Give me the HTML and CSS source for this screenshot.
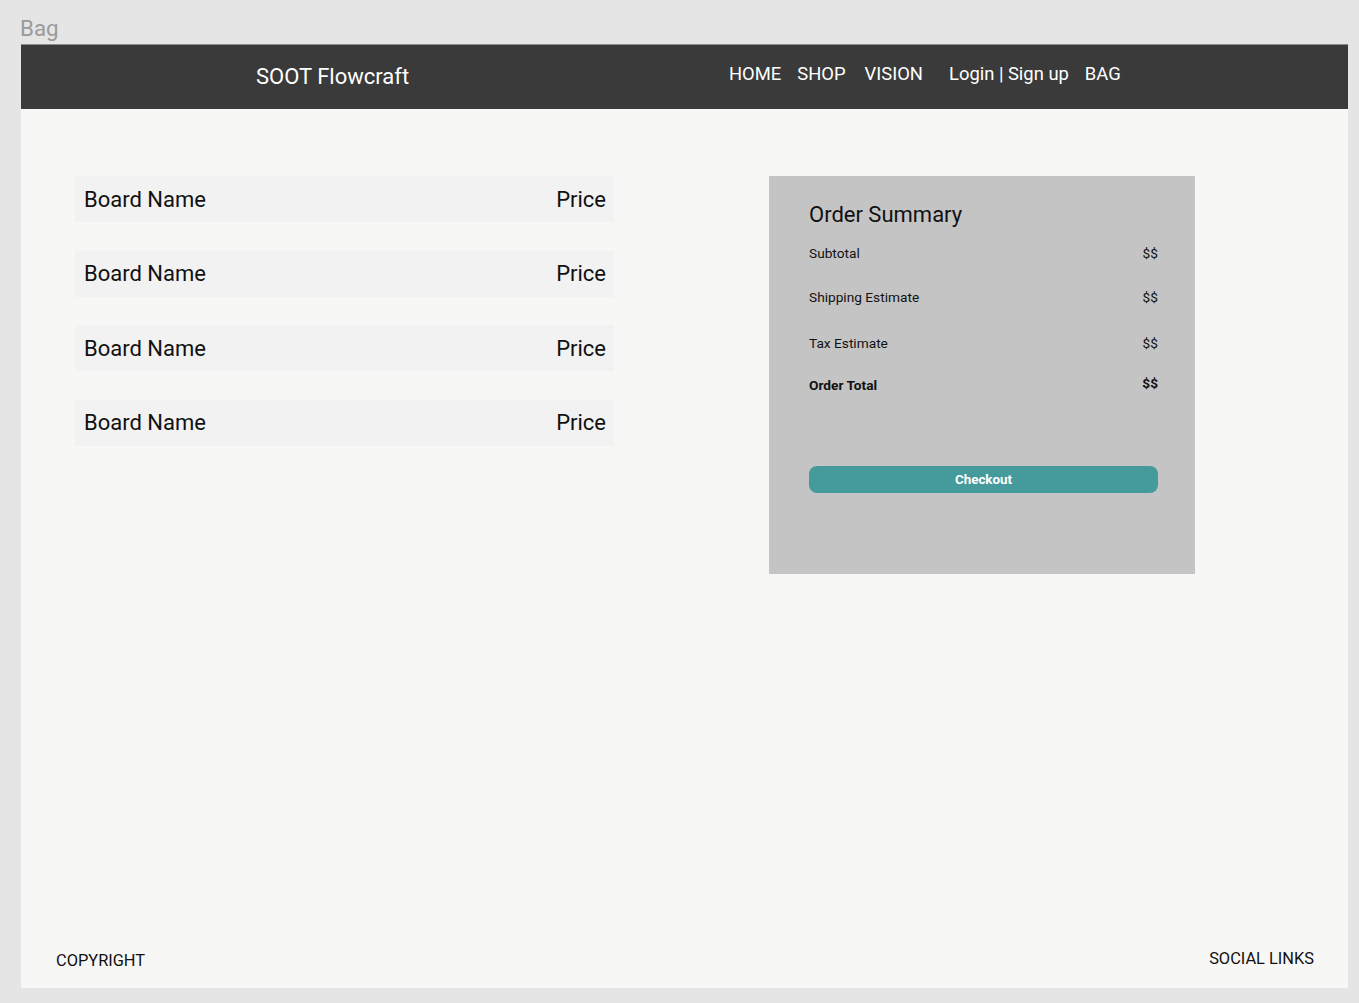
FILE: index.html
```html
<!DOCTYPE html>
<html lang="en">
<head>
<meta charset="utf-8">
<title>Bag</title>
<link rel="stylesheet" href="styles.css">
</head>
<body>
<div class="page-title">Bag</div>
<div class="frame">
  <header class="topbar">
    <div class="logo">SOOT Flowcraft</div>
    <nav class="nav">
      <a class="nav-link">HOME</a>
      <a class="nav-link">SHOP</a>
      <a class="nav-link nav-vision">VISION</a>
      <a class="nav-link nav-login">Login | Sign up</a>
      <a class="nav-link nav-bag">BAG</a>
    </nav>
  </header>
  <main class="content">
    <section class="items">
      <div class="item"><span>Board Name</span><span>Price</span></div>
      <div class="item"><span>Board Name</span><span>Price</span></div>
      <div class="item"><span>Board Name</span><span>Price</span></div>
      <div class="item"><span>Board Name</span><span>Price</span></div>
    </section>
    <aside class="summary">
      <h2 class="summary-title">Order Summary</h2>
      <div class="summary-rows">
        <div class="summary-row"><span>Subtotal</span><span>$$</span></div>
        <div class="summary-row"><span>Shipping Estimate</span><span>$$</span></div>
        <div class="summary-row tax"><span>Tax Estimate</span><span>$$</span></div>
        <div class="summary-row total"><span>Order Total</span><span class="total-val">$$</span></div>
      </div>
      <button class="checkout">Checkout</button>
    </aside>
  </main>
  <footer class="footer">
    <span class="copyright">COPYRIGHT</span>
    <span class="social">SOCIAL LINKS</span>
  </footer>
</div>
</body>
</html>
```
FILE: styles.css
```css
* { box-sizing: border-box; }
html, body {
  margin: 0;
  padding: 0;
}
body {
  background: #e5e5e5;
  font-family: Roboto, "Liberation Sans", Arial, sans-serif;
  width: 1359px;
  height: 1003px;
  overflow: hidden;
}
.page-title {
  height: 44px;
  padding: 15px 0 0 20px;
  font-size: 22.3px;
  line-height: 26px;
  color: #9a9a9a;
}
.frame {
  margin-left: 21px;
  width: 1327px;
  height: 944px;
  background: #f7f7f5;
  display: flex;
  flex-direction: column;
}
.topbar {
  height: 65px;
  background: #3a3a3a;
  border-top: 1px solid #8a8a8a;
  display: flex;
  align-items: flex-start;
  padding-left: 235px;
  color: #ffffff;
}
.logo {
  font-size: 22px;
  line-height: 26px;
  margin-top: 19px;
  width: 473px;
}
.nav {
  display: flex;
  margin-top: 17px;
  font-size: 18.4px;
  line-height: 24px;
}
.nav-link {
  color: #ffffff;
  margin-right: 16px;
}
.nav-vision { margin-left: 3px; }
.nav-login { margin-left: 10px; }
.nav-bag { margin-left: 0; }
.content {
  display: flex;
  align-items: flex-start;
  padding: 67px 0 0 54px;
}
.items {
  width: 539px;
  display: flex;
  flex-direction: column;
  gap: 28.67px;
}
.item {
  height: 46px;
  background: #f2f2f2;
  display: flex;
  align-items: center;
  justify-content: space-between;
  padding: 0 8px 0 9px;
  font-size: 22px;
  color: #111;
}
.summary {
  margin-left: 155px;
  width: 426px;
  height: 398px;
  background: #c4c4c4;
  padding: 26px 37px 0 40px;
  color: #111;
}
.summary-title {
  margin: 0;
  font-weight: 400;
  font-size: 22px;
  line-height: 26px;
}
.summary-rows {
  margin-top: 17px;
  display: flex;
  flex-direction: column;
  gap: 28px;
}
.summary-row {
  display: flex;
  justify-content: space-between;
  font-size: 13.7px;
  line-height: 16px;
}
.summary-row.tax { margin-top: 2px; margin-bottom: -2px; }
.summary-row.total { font-weight: 700; }
.total-val { position: relative; top: -2px; }
.checkout {
  display: block;
  margin-top: 73px;
  width: 349px;
  height: 27px;
  border: none;
  border-radius: 8px;
  background: #459a9c;
  color: #ffffff;
  font-family: Roboto, "Liberation Sans", Arial, sans-serif;
  font-size: 13.4px;
  font-weight: 700;
  padding: 0;
}
.footer {
  margin-top: auto;
  display: flex;
  justify-content: space-between;
  align-items: flex-end;
  padding: 0 34px 19px 35px;
  font-size: 16.4px;
  line-height: 20px;
  color: #111;
}
.copyright { position: relative; top: 2px; }
```
